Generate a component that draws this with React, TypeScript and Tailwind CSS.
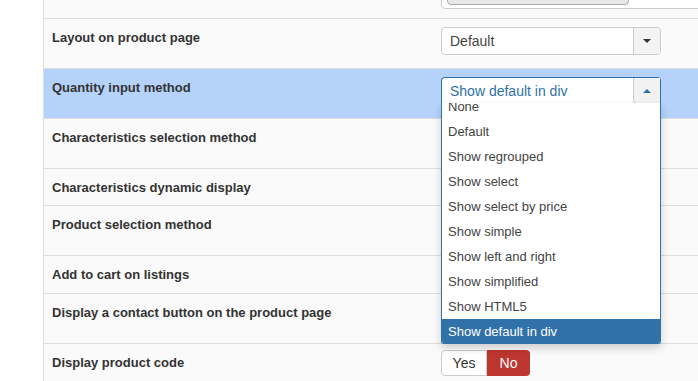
const options = [
  'None',
  'Default',
  'Show regrouped',
  'Show select',
  'Show select by price',
  'Show simple',
  'Show left and right',
  'Show simplified',
  'Show HTML5',
  'Show default in div',
]

const rows = [
  { label: 'Layout on product page', h: 'h-[50px]', control: 'select' },
  { label: 'Quantity input method', h: 'h-[50px]', control: 'open', active: true },
  { label: 'Characteristics selection method', h: 'h-[50px]' },
  { label: 'Characteristics dynamic display', h: 'h-[37px]' },
  { label: 'Product selection method', h: 'h-[50px]' },
  { label: 'Add to cart on listings', h: 'h-[38px]' },
  { label: 'Display a contact button on the product page', h: 'h-[50px]' },
  { label: 'Display product code', h: 'h-[40px]', control: 'yesno' },
]

function Caret({ up, color }: { up?: boolean; color: string }) {
  return (
    <svg width="8" height="4" viewBox="0 0 8 4">
      <path d={up ? 'M0 4 L4 0 L8 4 Z' : 'M0 0 L8 0 L4 4 Z'} fill={color} />
    </svg>
  )
}

function ClosedSelect({ value }: { value: string }) {
  return (
    <div className="flex h-[28px] w-[220px] mt-[8px] rounded-[4px] border border-[#cccccc] bg-white overflow-hidden">
      <div className="flex-1 flex items-center pl-[8px] text-[14px] text-[#444]">{value}</div>
      <div className="w-[27px] flex items-center justify-center bg-[#f3f3f3] border-l border-[#cccccc]">
        <Caret color="#333" />
      </div>
    </div>
  )
}

function OpenSelect() {
  return (
    <div className="relative mt-[8px] w-[220px]">
      <div className="flex h-[27px] rounded-t-[4px] border border-b-0 border-[#3071a9] bg-white">
        <div className="flex-1 flex items-center pl-[8px] text-[14px] text-[#3071a9]">Show default in div</div>
        <div className="w-[27px] flex items-center justify-center bg-[#f2f2f2] border-l border-b border-[#cccccc] rounded-bl-[4px]">
          <Caret up color="#3071a9" />
        </div>
      </div>
      <div className="absolute left-0 top-[26px] z-10 w-[220px] h-[241px] overflow-hidden border border-t-0 border-[#3071a9] bg-white rounded-b-[3px] shadow-[0_4px_8px_rgba(0,0,0,0.18)]">
        <div className="-mt-[9px]">
          {options.map((o, i) => (
            <div
              key={o}
              className={
                'h-[25px] flex items-center pl-[6px] text-[13px] ' +
                (i === options.length - 1 ? 'bg-[#3071a9] text-white' : 'text-[#444]')
              }
            >
              {o}
            </div>
          ))}
        </div>
      </div>
    </div>
  )
}

function YesNo() {
  return (
    <div className="flex mt-[6px] h-[26px] text-[14px]">
      <div className="w-[46px] flex items-center justify-center bg-white border border-[#cccccc] rounded-l-[4px] text-[#333]">
        Yes
      </div>
      <div className="w-[43px] flex items-center justify-center bg-[#bd362f] rounded-r-[4px] text-white">No</div>
    </div>
  )
}

export default function App() {
  return (
    <div className="flex h-[381px] w-[698px] overflow-hidden bg-white font-['Liberation_Sans',Arial,sans-serif]">
      <div className="w-[44px] shrink-0 bg-white border-r border-[#dddddd]" />
      <div className="flex-1 bg-[#fafafa]">
        <div className="h-[19px] flex border-b border-[#dddddd]">
          <div className="w-[397px] shrink-0" />
          <div className="flex-1 relative">
            <div className="absolute left-0 -right-[20px] -top-[20px] h-[29px] bg-white border border-[#cccccc] rounded-[4px]">
              <div className="absolute left-[5px] top-[3px] w-[182px] h-[21px] rounded-[4px] border border-[#aaaaaa] bg-[#e8e8e8] text-[12px] text-[#777] pl-[6px] leading-[14px]">
                Display products list ( ... )
              </div>
            </div>
          </div>
        </div>
        {rows.map((r) => (
          <div
            key={r.label}
            className={'flex border-b border-[#dddddd] ' + r.h + (r.active ? ' bg-[#b5d2fb]' : '')}
          >
            <div className="w-[397px] shrink-0 pl-[8px] pt-[10px] text-[13px] leading-[18px] font-bold text-[#333]">
              {r.label}
            </div>
            <div className="flex-1">
              {r.control === 'select' && <ClosedSelect value="Default" />}
              {r.control === 'open' && <OpenSelect />}
              {r.control === 'yesno' && <YesNo />}
            </div>
          </div>
        ))}
      </div>
    </div>
  )
}
